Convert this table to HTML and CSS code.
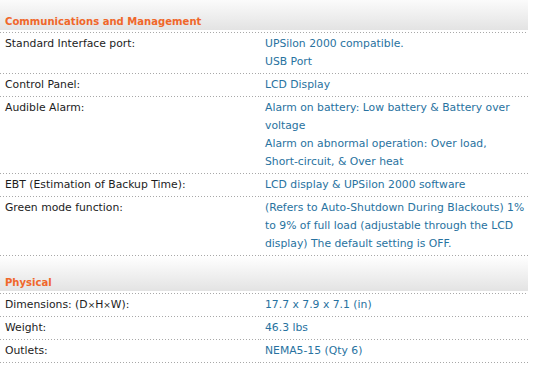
FILE: index.html
```html
<!DOCTYPE html>
<html lang="en">
<head>
    <meta charset="UTF-8">
    <meta name="viewport" content="width=device-width, initial-scale=1.0">
    <title>Specifications</title>
    <link rel="stylesheet" href="styles.css">
</head>
<body>

    <table class="specs">
        <colgroup>
            <col class="col-label">
            <col class="col-value">
        </colgroup>
        <tbody>
            <tr class="group">
                <th colspan="2">Communications and Management</th>
            </tr>
            <tr>
                <td class="label">Standard Interface port:</td>
                <td class="value">UPSilon 2000 compatible.<br>USB Port</td>
            </tr>
            <tr>
                <td class="label">Control Panel:</td>
                <td class="value">LCD Display</td>
            </tr>
            <tr>
                <td class="label">Audible Alarm:</td>
                <td class="value">Alarm on battery: Low battery &amp; Battery over voltage<br>Alarm on abnormal operation: Over load, <span class="nowrap">Short-circuit,</span> &amp; Over heat</td>
            </tr>
            <tr>
                <td class="label">EBT (Estimation of Backup Time):</td>
                <td class="value">LCD display &amp; UPSilon 2000 software</td>
            </tr>
            <tr>
                <td class="label">Green mode function:</td>
                <td class="value">(Refers to Auto-Shutdown During Blackouts) 1% to 9% of full load (adjustable through the LCD display) The default setting is OFF.</td>
            </tr>

            <tr class="group">
                <th colspan="2">Physical</th>
            </tr>
            <tr>
                <td class="label">Dimensions: (D<span class="times">&times;</span>H<span class="times">&times;</span>W):</td>
                <td class="value">17.7 x 7.9 x 7.1 (in)</td>
            </tr>
            <tr>
                <td class="label">Weight:</td>
                <td class="value">46.3 lbs</td>
            </tr>
            <tr>
                <td class="label">Outlets:</td>
                <td class="value">NEMA5-15 (Qty 6)</td>
            </tr>
        </tbody>
    </table>

</body>
</html>
```

FILE: styles.css
```css
body {
    margin: 0;
    background: #fff;
    font-family: "DejaVu Sans", Verdana, sans-serif;
    font-size: 10.8px;
    line-height: 18px;
}

.specs {
    width: 528px;
    margin-top: -5px;
    table-layout: fixed;
    border-collapse: collapse;
    border-spacing: 0;
}

.col-label {
    width: 260px;
}

/* every row ends on a 1px dotted rule, one dot every 3px */
.specs td,
.specs th {
    padding: 2px 0 3px 5px;
    vertical-align: top;
    text-align: left;
    background: linear-gradient(to right, #a8a8a8 1px, transparent 1px) 0 100% / 3px 1px repeat-x;
}

.specs .group th {
    padding: 18px 5px 2px;
    color: #f0672a;
    font-family: "DejaVu Sans Condensed", "DejaVu Sans", sans-serif;
    font-size: 11.2px;
    font-weight: bold;
    background:
        linear-gradient(to right, #a8a8a8 1px, transparent 1px) 0 100% / 3px 1px repeat-x,
        linear-gradient(#fff, #e3e3e3) 0 0 / 100% calc(100% - 3px) no-repeat;
}

.label {
    color: #1c1c1c;
}

.value {
    color: #2872a0;
}

.nowrap {
    white-space: nowrap;
}

.times {
    font-size: 9px;
}
```
